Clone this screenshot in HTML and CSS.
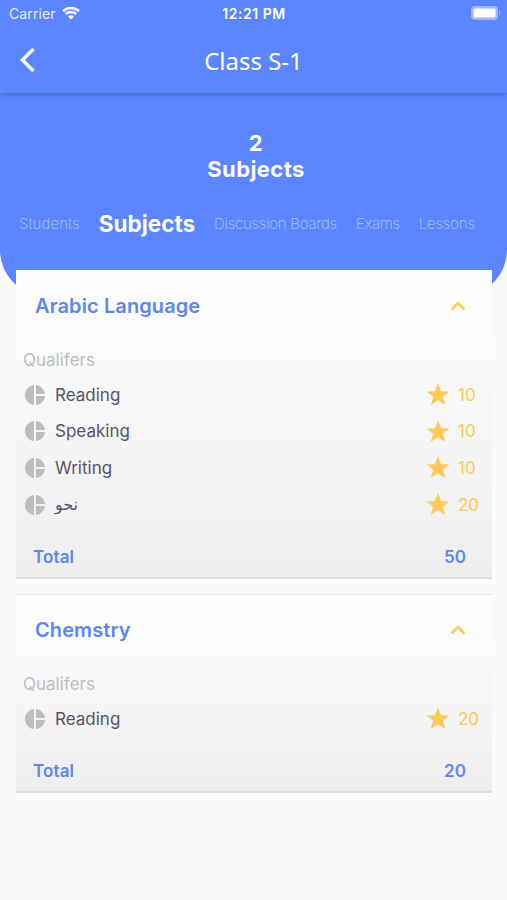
FILE: index.html
```html
<!DOCTYPE html>
<html lang="en">

<head>
    <meta charset="UTF-8">
    <meta name="viewport" content="width=device-width, initial-scale=1.0">
    <title>Class S-1</title>
    <link rel="stylesheet" href="styles.css">
</head>

<body>
    <!-- shared icons -->
    <svg class="sprite">
        <symbol id="pie" viewBox="0 0 24 24">
            <path d="M11 2v20c-5.07-.5-9-4.79-9-10s3.93-9.5 9-10zm2.03 0v8.99H22c-.47-4.74-4.24-8.52-8.97-8.99zm0 11.01V22c4.74-.47 8.5-4.25 8.97-8.99h-8.97z" />
        </symbol>
        <symbol id="star" viewBox="0 0 24 24">
            <path d="M12 0l3.2 8.5 8.8.3-7 5.5 2.6 8.7L12 18l-7.6 5L7 14.3 0 8.8l8.8-.3z" />
        </symbol>
        <symbol id="up" viewBox="0 0 16 10">
            <path d="M1.500 8.500L8 2l6.500 6.500" fill="none" stroke="currentColor" stroke-width="2.600" />
        </symbol>
    </svg>

    <header class="topbar">
        <div class="status">
            <div class="carrier">
                <span>Carrier</span>
                <svg class="wifi" viewBox="0 0 18 14">
                    <path d="M1 5.200C5.500.9 12.500.9 17 5.200" />
                    <path d="M3.700 8C6.700 5.200 11.300 5.200 14.300 8" />
                    <path class="dot" d="M9 13.600L5.900 10.400C7.600 8.900 10.400 8.900 12.100 10.400z" />
                </svg>
            </div>
            <div class="time">12:21 PM</div>
            <svg class="battery" viewBox="0 0 30 14">
                <rect class="shell" x="0" y="0" width="27" height="14" rx="4" />
                <path class="shell" d="M28 4.500q2 2.500 0 5z" />
                <rect x="2.500" y="2.500" width="22" height="9" rx="1.500" />
            </svg>
        </div>
        <div class="nav">
            <svg class="back" viewBox="0 0 16 26">
                <path d="M13.500 2L2.500 13l11 11" />
            </svg>
            <h1>Class S-1</h1>
        </div>
    </header>

    <section class="hero">
        <div class="count">2<br>Subjects</div>
        <nav class="tabs">
            <a class="students">Students</a>
            <a class="active">Subjects</a>
            <a>Discussion Boards</a>
            <a>Exams</a>
            <a>Lessons</a>
        </nav>
    </section>

    <main class="list">
        <article class="card">
            <div class="card-head">
                <h2>Arabic Language</h2>
                <svg class="chevron"><use href="#up" /></svg>
            </div>
            <div class="label">Qualifers</div>
            <ul>
                <li><svg class="pie"><use href="#pie" /></svg><span class="name">Reading</span><svg class="star"><use href="#star" /></svg><span class="mark">10</span></li>
                <li><svg class="pie"><use href="#pie" /></svg><span class="name">Speaking</span><svg class="star"><use href="#star" /></svg><span class="mark">10</span></li>
                <li><svg class="pie"><use href="#pie" /></svg><span class="name">Writing</span><svg class="star"><use href="#star" /></svg><span class="mark">10</span></li>
                <li><svg class="pie"><use href="#pie" /></svg><span class="name arabic" lang="ar">نحو</span><svg class="star"><use href="#star" /></svg><span class="mark">20</span></li>
            </ul>
            <div class="total"><span>Total</span><span>50</span></div>
        </article>

        <article class="card">
            <div class="card-head">
                <h2>Chemstry</h2>
                <svg class="chevron"><use href="#up" /></svg>
            </div>
            <div class="label">Qualifers</div>
            <ul>
                <li><svg class="pie"><use href="#pie" /></svg><span class="name">Reading</span><svg class="star"><use href="#star" /></svg><span class="mark">20</span></li>
            </ul>
            <div class="total"><span>Total</span><span>20</span></div>
        </article>
    </main>
</body>

</html>
```
FILE: styles.css
```css
* {
    margin: 0;
    padding: 0;
    box-sizing: border-box;
}

body {
    background-color: #fafafa;
    font-family: Inter, "Liberation Sans", sans-serif;
    color: #55526b;
}

svg {
    display: block;
    flex: none;
}

.sprite {
    display: none;
}

.topbar {
    position: relative;
    height: 93px;
    background-color: #5b86ff;
    color: #fff;
    box-shadow: 0 1px 5px rgba(20, 40, 120, 0.4);
}

.status {
    display: grid;
    grid-template-columns: 1fr auto 1fr;
    align-items: center;
    height: 28px;
    padding: 0 6px 0 9px;
    font-size: 14px;
}

.carrier {
    display: flex;
    align-items: center;
    gap: 6px;
    margin-top: -1px;
    color: #e6edff;
    letter-spacing: 0.1px;
}

.wifi {
    width: 18px;
    height: 14px;
    margin-top: -1px;
    fill: none;
    stroke: #fff;
    stroke-width: 2.5;
}

.wifi .dot {
    fill: #fff;
    stroke: none;
}

.time {
    margin: -1px 0 0 -2px;
    font-weight: 600;
    letter-spacing: 0.55px;
}

.battery {
    width: 30px;
    height: 14px;
    margin-top: -2px;
    justify-self: end;
    fill: #fff;
}

.battery .shell {
    fill: #9db6ff;
}

.nav {
    display: grid;
    grid-template-columns: 1fr auto 1fr;
    align-items: center;
    height: 65px;
    padding: 0 20px;
}

.back {
    width: 16px;
    height: 26px;
    margin-bottom: 2px;
    fill: none;
    stroke: #fff;
    stroke-width: 3.4;
}

.nav h1 {
    font-family: "Noto Sans", sans-serif;
    font-size: 24px;
    font-weight: 400;
    line-height: 34px;
}

.hero {
    height: 203px;
    padding-top: 37px;
    background-color: #5b86ff;
    border-radius: 0 0 46px 46px;
    color: #fff;
}

.count {
    padding-left: 5px;
    text-align: center;
    font-size: 22px;
    font-weight: 700;
    line-height: 26px;
    letter-spacing: 0.4px;
}

.tabs {
    display: flex;
    align-items: center;
    gap: 19px;
    height: 32px;
    margin-top: 25px;
    padding-left: 19px;
    font-size: 15px;
    font-weight: 200;
    letter-spacing: -0.25px;
    white-space: nowrap;
}

.tabs a {
    color: #b3c8ff;
}

.tabs .students {
    letter-spacing: 0.1px;
}

.tabs .active {
    color: #fff;
    font-size: 22.5px;
    font-weight: 700;
    letter-spacing: 0;
}

.list {
    position: relative;
    display: grid;
    gap: 15px;
    margin: -26px 15px 0 16px;
}

.card {
    background: linear-gradient(#fff, #fdfdfd 15%, #ededed);
    border-bottom: 2px solid #dcdcdc;
}

.card + .card {
    border-top: 1px solid #e6e6e6;
}

.card-head {
    display: flex;
    align-items: center;
    justify-content: space-between;
    height: 71px;
    padding: 0 26px 0 19px;
}

.card + .card .card-head {
    height: 70px;
}

.card-head h2 {
    color: #5b86f5;
    font-size: 20px;
    font-weight: 600;
    letter-spacing: 0.1px;
}

.chevron {
    width: 16px;
    height: 10px;
    color: #ffc857;
}

.label {
    height: 35.5px;
    padding-left: 7px;
    color: #bdbdbd;
    font-size: 17px;
    line-height: 38px;
}

.card ul {
    list-style: none;
}

.card li {
    display: flex;
    align-items: center;
    height: 36.6px;
    padding-left: 7px;
    font-size: 17px;
}

.pie {
    width: 24px;
    height: 24px;
    fill: #bdbdbd;
}

.name {
    flex: 1;
    padding-left: 8px;
}

.arabic {
    font-family: "DejaVu Sans", sans-serif;
    font-size: 16px;
}

.star {
    width: 24px;
    height: 23px;
    fill: #ffc857;
}

.mark {
    width: 34px;
    margin-left: 8px;
    color: #ffc857;
}

.total {
    display: flex;
    align-items: center;
    justify-content: space-between;
    height: 40px;
    margin-top: 14.1px;
    padding: 0 26px 0 17px;
    color: #5b86f5;
    font-size: 17px;
    font-weight: 600;
    letter-spacing: 0.1px;
}
```
